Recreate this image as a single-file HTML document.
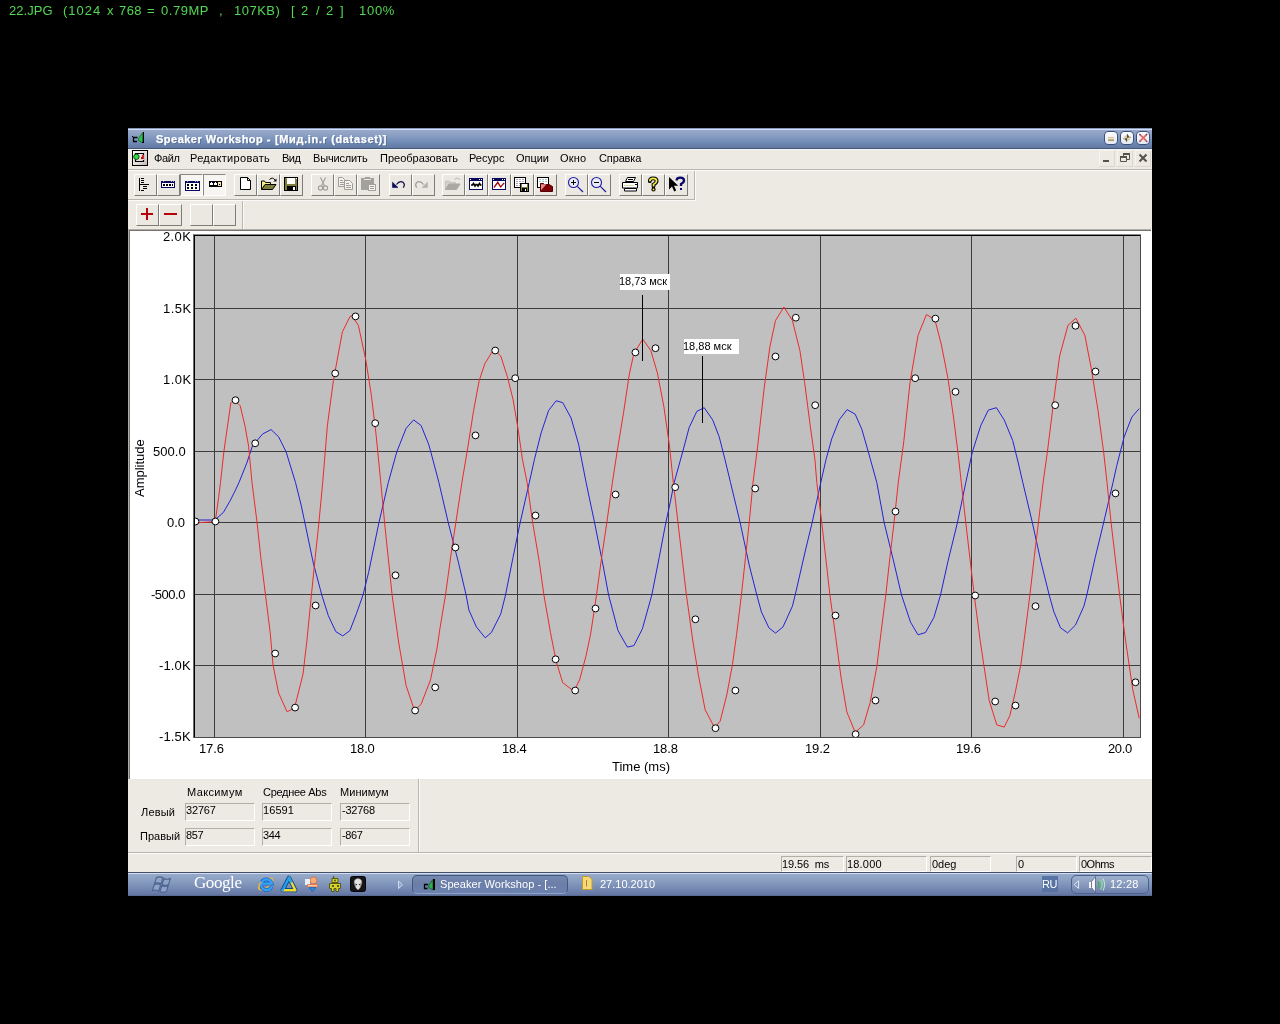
<!DOCTYPE html>
<html lang="ru">
<head>
<meta charset="utf-8">
<title>22.JPG - Speaker Workshop</title>
<style>
html,body{margin:0;padding:0;background:#000;}
body{width:1280px;height:1024px;overflow:hidden;position:relative;font-family:"Liberation Sans", sans-serif;font-size:11px;}
div,span.t,svg{position:absolute;box-sizing:border-box;}
span.t{white-space:pre;font-family:"Liberation Sans", sans-serif;will-change:transform;}
svg{overflow:visible;}
.btn{background:#ebe8e2;border-top:1px solid #fff;border-left:1px solid #fff;border-right:1px solid #7e7c77;border-bottom:1px solid #7e7c77;}
.btnp{background:#f6f5f1;border-top:1px solid #8a8882;border-left:1px solid #8a8882;border-right:1px solid #fff;border-bottom:1px solid #fff;}
.fld{border-top:1px solid #b2afa6;border-left:1px solid #b2afa6;border-right:1px solid #fff;border-bottom:1px solid #fff;}
</style>
</head>
<body>
<header class="viewer-info">
<span class="t" style="left:9.26px;top:2.30px;font-size:13px;line-height:17px;color:#52d852;letter-spacing:0.05px;">22.JPG</span>
<span class="t" style="left:62.50px;top:2.30px;font-size:13px;line-height:17px;color:#52d852;letter-spacing:1.00px;">(1024</span>
<span class="t" style="left:106.95px;top:2.30px;font-size:13px;line-height:17px;color:#52d852;">x</span>
<span class="t" style="left:119.36px;top:2.30px;font-size:13px;line-height:17px;color:#52d852;letter-spacing:0.42px;">768</span>
<span class="t" style="left:146.98px;top:2.30px;font-size:13px;line-height:17px;color:#52d852;">=</span>
<span class="t" style="left:160.93px;top:2.30px;font-size:13px;line-height:17px;color:#52d852;letter-spacing:0.53px;">0.79MP</span>
<span class="t" style="left:219.19px;top:2.30px;font-size:13px;line-height:17px;color:#52d852;">,</span>
<span class="t" style="left:234.30px;top:2.30px;font-size:13px;line-height:17px;color:#52d852;letter-spacing:0.49px;">107KB)</span>
<span class="t" style="left:290.60px;top:2.30px;font-size:13px;line-height:17px;color:#52d852;">[</span>
<span class="t" style="left:301.46px;top:2.30px;font-size:13px;line-height:17px;color:#52d852;">2</span>
<span class="t" style="left:315.71px;top:2.30px;font-size:13px;line-height:17px;color:#52d852;">/</span>
<span class="t" style="left:325.66px;top:2.30px;font-size:13px;line-height:17px;color:#52d852;">2</span>
<span class="t" style="left:339.83px;top:2.30px;font-size:13px;line-height:17px;color:#52d852;">]</span>
<span class="t" style="left:359.30px;top:2.30px;font-size:13px;line-height:17px;color:#52d852;letter-spacing:0.71px;">100%</span>
</header>
<main class="screenshot">
<div style="left:128px;top:128px;width:1024px;height:768px;background:#edeae3"></div>
<header class="titlebar">
<div style="left:128px;top:128px;width:1024px;height:21px;background:linear-gradient(#8797b8 0px,#8797b8 1px,#d0defc 1px,#d0defc 2px,#98a9c9 2px,#8fa2c5 6px,#7d95bd 11px,#6b86b1 16px,#647ca6 19px,#657a9c 20px,#47597a 20px,#47597a 21px)"></div>
<span class="t" style="left:155.55px;top:131.99px;font-size:11px;line-height:15px;color:#fff;font-weight:bold;letter-spacing:0.49px;text-shadow:1px 1px 0 rgba(60,80,120,0.5);-webkit-text-stroke:0.25px #fff;">Speaker Workshop -</span>
<span class="t" style="left:274.69px;top:131.99px;font-size:11px;line-height:15px;color:#fff;font-weight:bold;letter-spacing:0.64px;text-shadow:1px 1px 0 rgba(60,80,120,0.5);-webkit-text-stroke:0.25px #fff;">[Мид.in.r (dataset)]</span>
<svg style="left:0;top:0" width="1280" height="1024" viewBox="0 0 1280 1024"><defs><linearGradient id="cb" x1="0" y1="0" x2="0" y2="1"><stop offset="0" stop-color="#fdfdff"/><stop offset="1" stop-color="#e2e7f1"/></linearGradient><linearGradient id="mi" x1="0" y1="0" x2="1" y2="1"><stop offset="0" stop-color="#fafafa"/><stop offset="0.6" stop-color="#e4dcdc"/><stop offset="1" stop-color="#c4b4b4"/></linearGradient></defs><path d="M137.5,137.5h-4v4h3.5" fill="none" stroke="#000" stroke-width="1.3" /><rect x="132" y="136" width="1" height="1" fill="#000" shape-rendering="crispEdges"/><path d="M138.6,138.6L142.6,132.6V142.6L138.6,140.6Z" fill="#28c850" stroke="#0c6a28" stroke-width="0.8" /><rect x="143" y="132" width="1" height="11" fill="#000" shape-rendering="crispEdges"/><rect x="142" y="142" width="1" height="1" fill="#000" shape-rendering="crispEdges"/><rect x="1104.5" y="131.5" width="13" height="13" rx="3.5" fill="url(#cb)" stroke="#3a5180" stroke-width="1"/><rect x="1120.5" y="131.5" width="13" height="13" rx="3.5" fill="url(#cb)" stroke="#3a5180" stroke-width="1"/><rect x="1136.5" y="131.5" width="13" height="13" rx="3.5" fill="url(#cb)" stroke="#3a5180" stroke-width="1"/><rect x="1108" y="137" width="6" height="1" fill="#d6c59a" shape-rendering="crispEdges"/><rect x="1108" y="138" width="6" height="1" fill="#ece4cc" shape-rendering="crispEdges"/><rect x="1108" y="139" width="6" height="1" fill="#c9b684" shape-rendering="crispEdges"/><rect x="1108" y="140" width="6" height="1" fill="#a89a78" shape-rendering="crispEdges"/><path d="M1127,133.6L1130.2,138H1127Z" fill="#4e4e56" stroke="none" stroke-width="1" /><path d="M1127,142.2L1123.8,138H1127Z" fill="#4e4e56" stroke="none" stroke-width="1" /><path d="M1127,138L1131,136.6V138Z" fill="#c8b070" stroke="none" stroke-width="1" /><path d="M1127,138L1123,139.4V138Z" fill="#c8b070" stroke="none" stroke-width="1" /><path d="M1123.4,137.2L1127,134.4V138Z" fill="#d8c890" stroke="none" stroke-width="1" /><path d="M1130.6,138.8L1127,141.6V138Z" fill="#d8c890" stroke="none" stroke-width="1" /><path d="M1140,134.6L1146.6,141.2M1146.6,134.6L1140,141.2" fill="none" stroke="#e26a6a" stroke-width="1.9" /><path d="M1139.4,134L1140.4,135M1147.2,134L1146.2,135M1139.4,141.8L1140.4,140.8M1147.2,141.8L1146.2,140.8" fill="none" stroke="#6a3a3a" stroke-width="1.2" /><rect x="132" y="150" width="16" height="16" fill="#000" shape-rendering="crispEdges"/><rect x="133" y="151" width="14" height="14" fill="url(#mi)" shape-rendering="crispEdges"/><path d="M135.5,153.5h8v8h-8z" fill="none" stroke="#000" stroke-width="1.2" /><rect x="141" y="155" width="3" height="5" fill="#f0c8c8" shape-rendering="crispEdges"/><rect x="142" y="155" width="2" height="4" fill="#d82828" shape-rendering="crispEdges"/><rect x="141" y="157" width="2" height="2" fill="#b01818" shape-rendering="crispEdges"/><circle cx="136.4" cy="156.8" r="2.7" fill="#34d83c" stroke="#0a4a12" stroke-width="1"/><rect x="1114" y="151" width="1" height="16" fill="#dcd8ce" shape-rendering="crispEdges"/><rect x="1099" y="166" width="16" height="1" fill="#dcd8ce" shape-rendering="crispEdges"/><rect x="1099" y="150" width="15" height="1" fill="#f6f4f0" shape-rendering="crispEdges"/><rect x="1099" y="150" width="1" height="16" fill="#f6f4f0" shape-rendering="crispEdges"/><rect x="1132" y="151" width="1" height="16" fill="#dcd8ce" shape-rendering="crispEdges"/><rect x="1117" y="166" width="16" height="1" fill="#dcd8ce" shape-rendering="crispEdges"/><rect x="1117" y="150" width="15" height="1" fill="#f6f4f0" shape-rendering="crispEdges"/><rect x="1117" y="150" width="1" height="16" fill="#f6f4f0" shape-rendering="crispEdges"/><rect x="1150" y="151" width="1" height="16" fill="#dcd8ce" shape-rendering="crispEdges"/><rect x="1135" y="166" width="16" height="1" fill="#dcd8ce" shape-rendering="crispEdges"/><rect x="1135" y="150" width="15" height="1" fill="#f6f4f0" shape-rendering="crispEdges"/><rect x="1135" y="150" width="1" height="16" fill="#f6f4f0" shape-rendering="crispEdges"/><rect x="1103" y="160" width="6" height="2" fill="#55524c" shape-rendering="crispEdges"/><path d="M1123.5,156V153.5H1129.5V159.5H1127" fill="none" stroke="#55524c" stroke-width="1" /><rect x="1123" y="153" width="7" height="2" fill="#55524c" shape-rendering="crispEdges"/><path d="M1120.5,156.5h6v5h-6z" fill="none" stroke="#55524c" stroke-width="1" /><rect x="1120" y="156" width="7" height="2" fill="#55524c" shape-rendering="crispEdges"/><path d="M1139.5,154.5L1146.5,161.5M1146.5,154.5L1139.5,161.5" fill="none" stroke="#55524c" stroke-width="2" /></svg>
</header>
<nav class="menubar">
<div style="left:128px;top:149px;width:1024px;height:1px;background:#f4f6f6"></div>
<div style="left:128px;top:169px;width:1024px;height:1px;background:#b9b6ad"></div>
<div style="left:128px;top:170px;width:1024px;height:1px;background:#fbfaf8"></div>
<span class="t" style="left:153.55px;top:150.99px;font-size:11px;line-height:15px;color:#000;letter-spacing:-0.35px;">Файл</span>
<span class="t" style="left:190.40px;top:150.99px;font-size:11px;line-height:15px;color:#000;letter-spacing:0.31px;">Редактировать</span>
<span class="t" style="left:281.70px;top:150.99px;font-size:11px;line-height:15px;color:#000;letter-spacing:-0.50px;">Вид</span>
<span class="t" style="left:312.90px;top:150.99px;font-size:11px;line-height:15px;color:#000;letter-spacing:-0.16px;">Вычислить</span>
<span class="t" style="left:379.80px;top:150.99px;font-size:11px;line-height:15px;color:#000;">Преобразовать</span>
<span class="t" style="left:469.30px;top:150.99px;font-size:11px;line-height:15px;color:#000;">Ресурс</span>
<span class="t" style="left:516.02px;top:150.99px;font-size:11px;line-height:15px;color:#000;letter-spacing:-0.05px;">Опции</span>
<span class="t" style="left:560.42px;top:150.99px;font-size:11px;line-height:15px;color:#000;letter-spacing:0.15px;">Окно</span>
<span class="t" style="left:598.69px;top:150.99px;font-size:11px;line-height:15px;color:#000;letter-spacing:-0.13px;">Справка</span>
</nav>
<section class="toolbars">
<div style="left:128px;top:199px;width:567px;height:1px;background:#b9b6ad"></div>
<div style="left:128px;top:200px;width:568px;height:1px;background:#fbfaf8"></div>
<div style="left:694px;top:171px;width:1px;height:29px;background:#b9b6ad"></div>
<div style="left:695px;top:171px;width:1px;height:30px;background:#fbfaf8"></div>
<div class="btn" style="left:134px;top:174px;width:23px;height:22px;"></div>
<div class="btn" style="left:157px;top:174px;width:23px;height:22px;"></div>
<div class="btnp" style="left:180px;top:174px;width:23px;height:22px;"></div>
<div class="btnp" style="left:203px;top:174px;width:23px;height:22px;"></div>
<div class="btn" style="left:234px;top:174px;width:23px;height:22px;"></div>
<div class="btn" style="left:257px;top:174px;width:23px;height:22px;"></div>
<div class="btn" style="left:280px;top:174px;width:23px;height:22px;"></div>
<div class="btn" style="left:311px;top:174px;width:23px;height:22px;"></div>
<div class="btn" style="left:334px;top:174px;width:23px;height:22px;"></div>
<div class="btn" style="left:357px;top:174px;width:23px;height:22px;"></div>
<div class="btn" style="left:389px;top:174px;width:23px;height:22px;"></div>
<div class="btn" style="left:412px;top:174px;width:23px;height:22px;"></div>
<div class="btn" style="left:442px;top:174px;width:23px;height:22px;"></div>
<div class="btn" style="left:465px;top:174px;width:23px;height:22px;"></div>
<div class="btn" style="left:488px;top:174px;width:23px;height:22px;"></div>
<div class="btn" style="left:511px;top:174px;width:23px;height:22px;"></div>
<div class="btn" style="left:534px;top:174px;width:23px;height:22px;"></div>
<div class="btn" style="left:565px;top:174px;width:23px;height:22px;"></div>
<div class="btn" style="left:588px;top:174px;width:23px;height:22px;"></div>
<div class="btn" style="left:619px;top:174px;width:23px;height:22px;"></div>
<div class="btn" style="left:642px;top:174px;width:23px;height:22px;"></div>
<div class="btn" style="left:665px;top:174px;width:23px;height:22px;"></div>
<div style="left:242px;top:201px;width:1px;height:28px;background:#b9b6ad"></div>
<div style="left:243px;top:201px;width:1px;height:28px;background:#fbfaf8"></div>
<div class="btn" style="left:136px;top:204px;width:23px;height:22px;"></div>
<div class="btn" style="left:159px;top:204px;width:23px;height:22px;"></div>
<div class="btn" style="left:190px;top:204px;width:23px;height:22px;"></div>
<div class="btn" style="left:213px;top:204px;width:23px;height:22px;"></div>
<svg style="left:0;top:0" width="1280" height="1024" viewBox="0 0 1280 1024"><rect x="139" y="178" width="1" height="13" fill="#000" shape-rendering="crispEdges"/><rect x="141" y="178" width="3" height="1" fill="#000" shape-rendering="crispEdges"/><rect x="141" y="180" width="3" height="1" fill="#000" shape-rendering="crispEdges"/><rect x="141" y="182" width="3" height="1" fill="#000" shape-rendering="crispEdges"/><rect x="140" y="184" width="9" height="1" fill="#000" shape-rendering="crispEdges"/><rect x="143" y="186" width="4" height="1" fill="#000" shape-rendering="crispEdges"/><rect x="143" y="188" width="4" height="1" fill="#000" shape-rendering="crispEdges"/><rect x="141" y="190" width="3" height="1" fill="#000" shape-rendering="crispEdges"/><rect x="161" y="181" width="14" height="7" fill="#08085c" shape-rendering="crispEdges"/><rect x="162" y="183" width="12" height="4" fill="#fff" shape-rendering="crispEdges"/><rect x="163" y="184" width="2" height="2" fill="#000" shape-rendering="crispEdges"/><rect x="166" y="184" width="2" height="2" fill="#000" shape-rendering="crispEdges"/><rect x="169" y="184" width="2" height="2" fill="#000" shape-rendering="crispEdges"/><rect x="172" y="184" width="1" height="2" fill="#000" shape-rendering="crispEdges"/><rect x="163" y="181" width="1" height="1" fill="#9a9ac8" shape-rendering="crispEdges"/><rect x="171" y="181" width="1" height="1" fill="#9a9ac8" shape-rendering="crispEdges"/><rect x="173" y="181" width="1" height="1" fill="#9a9ac8" shape-rendering="crispEdges"/><rect x="185" y="181" width="15" height="10" fill="#08085c" shape-rendering="crispEdges"/><rect x="186" y="183" width="13" height="7" fill="#fff" shape-rendering="crispEdges"/><rect x="187" y="181" width="1" height="1" fill="#9a9ac8" shape-rendering="crispEdges"/><rect x="195" y="181" width="1" height="1" fill="#9a9ac8" shape-rendering="crispEdges"/><rect x="197" y="181" width="1" height="1" fill="#9a9ac8" shape-rendering="crispEdges"/><rect x="187" y="184" width="2" height="2" fill="#000" shape-rendering="crispEdges"/><rect x="191" y="184" width="2" height="2" fill="#000" shape-rendering="crispEdges"/><rect x="195" y="184" width="2" height="2" fill="#000" shape-rendering="crispEdges"/><rect x="187" y="187" width="2" height="2" fill="#000" shape-rendering="crispEdges"/><rect x="191" y="187" width="2" height="2" fill="#000" shape-rendering="crispEdges"/><rect x="195" y="187" width="2" height="2" fill="#000" shape-rendering="crispEdges"/><rect x="209" y="181" width="13" height="6" fill="#000" shape-rendering="crispEdges"/><rect x="210" y="183" width="3" height="2" fill="#fff" shape-rendering="crispEdges"/><rect x="214" y="183" width="3" height="2" fill="#fff" shape-rendering="crispEdges"/><rect x="218" y="182" width="3" height="4" fill="#f6e2a6" shape-rendering="crispEdges"/><rect x="219" y="184" width="1" height="1" fill="#000" shape-rendering="crispEdges"/><rect x="211" y="182" width="1" height="1" fill="#fff" shape-rendering="crispEdges"/><rect x="215" y="182" width="1" height="1" fill="#fff" shape-rendering="crispEdges"/><path d="M240.5,177.5h7l3,3v9h-10z" fill="#fff" stroke="#000" stroke-width="1" /><path d="M247.5,177.5v3h3" fill="none" stroke="#000" stroke-width="1" /><path d="M261.5,189.5v-8.5h3l1,1.5h5v2" fill="#f4f07c" stroke="#000" stroke-width="1" /><path d="M261.5,189.5l3.5,-5h11l-3.5,5z" fill="#7e7e3c" stroke="#000" stroke-width="1" /><path d="M269.5,179.5q3,-3 5.5,0.5" fill="none" stroke="#000" stroke-width="1" /><path d="M273.5,181.5h3v-3z" fill="#000" stroke="none" stroke-width="1" /><rect x="284" y="177" width="14" height="14" fill="#000" shape-rendering="crispEdges"/><rect x="285" y="178" width="12" height="12" fill="#7e7e3c" shape-rendering="crispEdges"/><rect x="287" y="178" width="8" height="6" fill="#fff" shape-rendering="crispEdges"/><rect x="287" y="186" width="9" height="4" fill="#000" shape-rendering="crispEdges"/><rect x="293" y="187" width="2" height="3" fill="#fff" shape-rendering="crispEdges"/><rect x="296" y="178" width="1" height="1" fill="#fff" shape-rendering="crispEdges"/><path d="M320.5,177.5L324.5,186M325.5,177.5L321.5,186" fill="none" stroke="#9f9d97" stroke-width="1.1" /><circle cx="320.5" cy="188" r="2.1" fill="none" stroke="#9f9d97" stroke-width="1.1"/><circle cx="325.5" cy="188" r="2.1" fill="none" stroke="#9f9d97" stroke-width="1.1"/><path d="M338.5,177.5h4l2,2v7h-6z" fill="#f3f2ee" stroke="#9f9d97" stroke-width="1" /><path d="M344.5,180.5h5l3,3v6h-8z" fill="#f3f2ee" stroke="#9f9d97" stroke-width="1" /><rect x="340" y="180" width="3" height="1" fill="#9f9d97" shape-rendering="crispEdges"/><rect x="340" y="182" width="4" height="1" fill="#9f9d97" shape-rendering="crispEdges"/><rect x="340" y="184" width="4" height="1" fill="#9f9d97" shape-rendering="crispEdges"/><rect x="346" y="183" width="3" height="1" fill="#9f9d97" shape-rendering="crispEdges"/><rect x="346" y="185" width="5" height="1" fill="#9f9d97" shape-rendering="crispEdges"/><rect x="346" y="187" width="5" height="1" fill="#9f9d97" shape-rendering="crispEdges"/><rect x="361" y="178" width="13" height="12" fill="#a3a19b" shape-rendering="crispEdges"/><rect x="365" y="177" width="5" height="1" fill="#a3a19b" shape-rendering="crispEdges"/><rect x="364" y="179" width="7" height="1" fill="#e6e4de" shape-rendering="crispEdges"/><rect x="368" y="184" width="8" height="7" fill="#a3a19b" shape-rendering="crispEdges"/><rect x="369" y="185" width="6" height="5" fill="#f3f2ee" shape-rendering="crispEdges"/><rect x="370" y="186" width="4" height="1" fill="#9f9d97" shape-rendering="crispEdges"/><rect x="370" y="188" width="4" height="1" fill="#9f9d97" shape-rendering="crispEdges"/><path d="M392.5,182.2L392.5,187.6L398,187.6Z" fill="#08085c" stroke="#08085c" stroke-width="0.6" /><path d="M396.5,184.5Q399.5,180.2 403,182.2Q405.6,184.6 403.2,187.6" fill="none" stroke="#0a0a40" stroke-width="1.2" /><path d="M427.5,182.2L427.5,187.6L422,187.6Z" fill="#b4b2ac" stroke="#b4b2ac" stroke-width="0.6" /><path d="M423.5,184.5Q420.5,180.2 417,182.2Q414.4,184.6 416.8,187.6" fill="none" stroke="#9f9d97" stroke-width="1.3" /><path d="M445.5,189.5v-8.5h4l1,1.5h5v2" fill="#d2d0ca" stroke="#c4c2bc" stroke-width="1" /><path d="M445.5,189.5l3.5,-5.5h11l-3.5,5.5z" fill="#aaa8a2" stroke="#aaa8a2" stroke-width="1" /><path d="M454.5,179.5q3,-3 5.5,0.5" fill="none" stroke="#b4b2ac" stroke-width="1" /><rect x="469" y="178" width="14" height="12" fill="#08085c" shape-rendering="crispEdges"/><rect x="470" y="181" width="12" height="8" fill="#fff" shape-rendering="crispEdges"/><rect x="470" y="179" width="1" height="1" fill="#fff" shape-rendering="crispEdges"/><rect x="479" y="179" width="1" height="1" fill="#fff" shape-rendering="crispEdges"/><rect x="481" y="179" width="1" height="1" fill="#fff" shape-rendering="crispEdges"/><rect x="492" y="178" width="14" height="12" fill="#08085c" shape-rendering="crispEdges"/><rect x="493" y="181" width="12" height="8" fill="#fff" shape-rendering="crispEdges"/><rect x="493" y="179" width="1" height="1" fill="#fff" shape-rendering="crispEdges"/><rect x="502" y="179" width="1" height="1" fill="#fff" shape-rendering="crispEdges"/><rect x="504" y="179" width="1" height="1" fill="#fff" shape-rendering="crispEdges"/><path d="M471,185h1.5l1,-1.5l1.5,2.5l1,-1.5h1l1,1.5l1.5,-2.5l1,1.5h1" fill="none" stroke="#000" stroke-width="1.6" /><path d="M494,187.5L497.8,182.3L500.6,187L504.2,182.8" fill="none" stroke="#a00010" stroke-width="1.3" /><rect x="514" y="177" width="12" height="11" fill="#000" shape-rendering="crispEdges"/><rect x="515" y="178" width="10" height="9" fill="#fff" shape-rendering="crispEdges"/><rect x="516" y="179" width="2" height="1" fill="#a8a8b8" shape-rendering="crispEdges"/><rect x="519" y="179" width="2" height="1" fill="#a8a8b8" shape-rendering="crispEdges"/><rect x="522" y="179" width="2" height="1" fill="#a8a8b8" shape-rendering="crispEdges"/><rect x="516" y="181" width="2" height="1" fill="#a8a8b8" shape-rendering="crispEdges"/><rect x="519" y="181" width="2" height="1" fill="#a8a8b8" shape-rendering="crispEdges"/><rect x="522" y="181" width="2" height="1" fill="#a8a8b8" shape-rendering="crispEdges"/><rect x="516" y="183" width="2" height="1" fill="#a8a8b8" shape-rendering="crispEdges"/><rect x="519" y="183" width="2" height="1" fill="#a8a8b8" shape-rendering="crispEdges"/><rect x="522" y="183" width="2" height="1" fill="#a8a8b8" shape-rendering="crispEdges"/><rect x="516" y="185" width="2" height="1" fill="#a8a8b8" shape-rendering="crispEdges"/><rect x="519" y="185" width="2" height="1" fill="#a8a8b8" shape-rendering="crispEdges"/><rect x="522" y="185" width="2" height="1" fill="#a8a8b8" shape-rendering="crispEdges"/><rect x="520" y="183" width="9" height="9" fill="#000" shape-rendering="crispEdges"/><rect x="521" y="184" width="7" height="7" fill="#7e7e3c" shape-rendering="crispEdges"/><rect x="522" y="184" width="5" height="3" fill="#fff" shape-rendering="crispEdges"/><rect x="522" y="188" width="5" height="3" fill="#000" shape-rendering="crispEdges"/><rect x="525" y="189" width="1" height="2" fill="#fff" shape-rendering="crispEdges"/><rect x="537" y="177" width="12" height="11" fill="#000" shape-rendering="crispEdges"/><rect x="538" y="178" width="10" height="9" fill="#fff" shape-rendering="crispEdges"/><rect x="539" y="179" width="2" height="1" fill="#a8c8c8" shape-rendering="crispEdges"/><rect x="542" y="179" width="2" height="1" fill="#a8c8c8" shape-rendering="crispEdges"/><rect x="545" y="179" width="2" height="1" fill="#a8c8c8" shape-rendering="crispEdges"/><rect x="539" y="181" width="2" height="1" fill="#a8c8c8" shape-rendering="crispEdges"/><rect x="542" y="181" width="2" height="1" fill="#a8c8c8" shape-rendering="crispEdges"/><rect x="545" y="181" width="2" height="1" fill="#a8c8c8" shape-rendering="crispEdges"/><path d="M540.5,191.5v-8h3l1,1h4.5l3.5,2v5z" fill="#800008" stroke="#500004" stroke-width="1" /><path d="M541,184.2h5.5l-5.5,6z" fill="#e48c8c" stroke="none" stroke-width="1" /><circle cx="573.5" cy="182.5" r="5" fill="#ebebf6" stroke="#1c1cac" stroke-width="1.1"/><path d="M577.3,186.3L583,192" fill="none" stroke="#1c1c9c" stroke-width="1.2" /><rect x="571" y="182" width="5" height="1" fill="#000" shape-rendering="crispEdges"/><rect x="573" y="180" width="1" height="5" fill="#000" shape-rendering="crispEdges"/><circle cx="596.5" cy="182.5" r="5" fill="#ebebf6" stroke="#1c1cac" stroke-width="1.1"/><path d="M600.3,186.3L606,192" fill="none" stroke="#1c1c9c" stroke-width="1.2" /><rect x="594" y="182" width="5" height="1" fill="#000" shape-rendering="crispEdges"/><path d="M625.5,181.5l2,-4h8l-2,4z" fill="#fff" stroke="#000" stroke-width="1" /><path d="M622.5,182.5h15v5.5h-15z" fill="#fff" stroke="#000" stroke-width="1" /><path d="M624.5,188.5h12v2.5h-12z" fill="#fff" stroke="#000" stroke-width="1" /><rect x="628" y="179" width="5" height="1" fill="#000" shape-rendering="crispEdges"/><rect x="624" y="185" width="10" height="1" fill="#d8d8a0" shape-rendering="crispEdges"/><rect x="635" y="184" width="2" height="1" fill="#000" shape-rendering="crispEdges"/><path d="M649.8,181.2Q649.8,178.3 653.2,178.3Q656.6,178.3 656.6,181Q656.6,182.8 653.5,184.6V186.6" fill="none" stroke="#000" stroke-width="3.8" stroke-linecap="round"/><path d="M649.8,181.2Q649.8,178.3 653.2,178.3Q656.6,178.3 656.6,181Q656.6,182.8 653.5,184.6V186.4" fill="none" stroke="#f6f040" stroke-width="1.7" /><circle cx="653.5" cy="189.5" r="2.1" fill="#000"/><circle cx="653.5" cy="189.5" r="1" fill="#f6f040"/><path d="M669,177v12.5l3,-3l2.2,5l2,-1l-2.2,-4.8h4.2z" fill="#000" stroke="none" stroke-width="1" /><path d="M676.6,180.6Q676.6,177.6 680.2,177.6Q684,177.6 684,180.4Q684,182.4 681,184V186" fill="none" stroke="#08086c" stroke-width="2.3" /><rect x="680" y="187.5" width="2.4" height="2.2" fill="#08086c" shape-rendering="crispEdges"/><rect x="141" y="213" width="12" height="2" fill="#b80008" shape-rendering="crispEdges"/><rect x="146" y="208" width="2" height="12" fill="#b80008" shape-rendering="crispEdges"/><rect x="164" y="213" width="13" height="2" fill="#b80008" shape-rendering="crispEdges"/></svg>
</section>
<section class="chart">
<div style="left:128px;top:229px;width:1024px;height:550px;background:#fff"></div>
<div style="left:128px;top:229px;width:1023px;height:1px;background:#b0aea8"></div>
<div style="left:129px;top:230px;width:1022px;height:1px;background:#76746e"></div>
<div style="left:128px;top:229px;width:1px;height:550px;background:#b0aea8"></div>
<div style="left:129px;top:230px;width:1px;height:549px;background:#76746e"></div>
<svg style="left:0;top:0" width="1280" height="1024" viewBox="0 0 1280 1024">
<defs><clipPath id="pc"><rect x="195" y="236" width="945" height="501"/></clipPath></defs>
<rect x="194" y="235" width="947" height="503" fill="#c0c0c0"/>
<g shape-rendering="crispEdges" fill="#3c3c3c">
<rect x="214" y="235" width="1" height="502"/>
<rect x="365" y="235" width="1" height="502"/>
<rect x="517" y="235" width="1" height="502"/>
<rect x="668" y="235" width="1" height="502"/>
<rect x="820" y="235" width="1" height="502"/>
<rect x="971" y="235" width="1" height="502"/>
<rect x="1123" y="235" width="1" height="502"/>
<rect x="194" y="308" width="946" height="1"/>
<rect x="194" y="379" width="946" height="1"/>
<rect x="194" y="451" width="946" height="1"/>
<rect x="194" y="522" width="946" height="1"/>
<rect x="194" y="594" width="946" height="1"/>
<rect x="194" y="665" width="946" height="1"/>
<rect x="193" y="234" width="948" height="1" fill="#8c8c8c"/>
<rect x="193" y="234" width="1" height="504" fill="#6a6a6a"/>
<rect x="194" y="235" width="947" height="1" fill="#000"/>
<rect x="194" y="235" width="1" height="503" fill="#000"/>
<rect x="194" y="737" width="947" height="1" fill="#4a4a4a"/>
<rect x="1140" y="235" width="1" height="503" fill="#4a4a4a"/>
</g>
<polyline clip-path="url(#pc)" fill="none" stroke="#2222d8" stroke-width="1" stroke-linejoin="round" points="196.1,520.0 214.9,520.0 223.3,512.5 229.9,501.2 235.5,490.0 239.0,482.5 246.8,463.0 252.4,446.1 262.7,433.9 271.1,429.6 278.6,436.8 286.1,451.8 295.5,482.5 301.1,505.0 304.9,522.8 313.3,563.1 321.8,595.0 328.3,615.6 335.8,631.6 342.8,635.9 349.9,630.6 356.4,613.8 363.0,595.0 368.6,572.5 378.9,522.8 388.3,482.5 396.8,451.8 406.1,428.3 413.6,419.9 421.1,425.5 428.6,444.2 430.5,450.8 438.9,482.5 448.3,522.8 458.6,563.1 466.1,595.0 468.9,610.0 476.4,626.9 485.2,637.8 491.4,632.5 500.8,613.8 505.5,595.0 513.0,557.5 520.1,522.8 529.3,482.5 534.5,459.2 541.1,433.0 548.6,410.5 556.1,400.8 562.7,402.6 571.1,418.0 578.6,444.2 586.1,482.5 594.6,522.8 603.0,565.0 608.6,595.0 618.0,630.6 627.4,647.1 633.9,645.6 642.4,628.8 651.8,595.0 659.2,557.5 665.8,522.8 670.5,501.2 674.2,482.5 682.7,451.8 689.2,427.4 696.8,411.4 704.2,407.7 712.7,419.9 719.2,436.8 724.9,459.2 730.5,482.5 740.2,522.8 749.2,565.0 756.8,595.0 761.4,611.9 768.9,627.8 775.5,633.1 783.0,626.9 792.4,606.2 795.2,595.0 805.5,550.0 812.1,522.8 820.8,482.5 826.1,459.2 831.8,438.6 839.2,419.9 847.1,409.6 855.2,414.2 861.8,429.2 868.3,451.8 876.8,482.5 884.2,522.8 893.6,561.2 901.5,595.0 910.5,622.2 918.0,634.8 925.5,632.5 933.9,617.5 940.5,595.0 948.0,561.2 957.4,522.8 965.8,482.5 972.4,451.8 980.8,425.5 988.3,410.1 996.4,407.7 1004.2,419.9 1012.7,440.5 1018.3,463.0 1022.8,482.5 1032.4,522.8 1040.8,561.2 1049.2,595.0 1053.9,611.9 1060.5,627.8 1067.6,632.9 1075.5,625.0 1083.9,606.2 1086.8,595.0 1095.2,557.5 1103.6,522.8 1113.0,482.5 1116.8,465.5 1124.2,436.8 1131.8,417.1 1139.2,408.6"/>
<polyline clip-path="url(#pc)" fill="none" stroke="#ee2a2a" stroke-width="1" stroke-linejoin="round" points="196.1,522.8 211.1,521.9 215.5,520.0 218.6,497.5 220.5,482.5 223.9,451.5 230.8,403.0 232.7,401.1 238.3,403.9 240.2,405.8 244.9,425.5 248.6,446.1 252.0,482.5 257.1,522.8 260.8,557.5 265.5,595.0 270.2,632.5 273.0,664.9 278.6,693.0 287.1,711.8 294.5,708.0 303.0,674.2 306.8,641.5 311.4,595.0 315.2,557.5 318.9,522.8 322.7,482.5 327.4,425.5 333.4,380.5 342.4,331.8 349.9,316.8 351.8,315.8 358.3,325.2 365.8,359.9 371.4,395.5 376.1,434.9 380.8,482.5 384.6,522.8 392.1,595.0 398.6,642.1 406.1,685.5 414.6,710.8 421.1,704.2 430.5,679.9 437.1,648.0 439.9,628.8 445.5,595.0 451.1,553.8 455.8,522.8 461.9,482.5 467.1,451.8 473.6,410.5 479.2,380.5 484.9,363.6 492.4,351.4 495.2,350.9 500.8,356.1 507.4,376.8 513.0,399.2 518.1,429.2 522.4,459.2 527.1,482.5 532.7,522.8 539.2,561.2 543.9,595.0 550.5,632.8 556.1,660.9 562.7,682.7 573.9,691.1 579.6,679.9 586.1,655.5 590.8,633.0 596.5,595.0 601.1,561.2 606.8,522.8 612.4,482.5 617.1,451.8 623.6,412.4 629.2,374.9 633.9,353.3 642.8,339.2 650.8,350.5 657.4,373.0 663.9,406.8 669.5,446.1 673.3,482.5 678.0,522.8 686.4,595.0 693.0,642.1 698.6,676.1 705.2,709.9 714.6,727.7 720.2,721.1 726.8,694.9 732.4,664.9 736.6,634.5 741.4,595.0 745.5,557.5 749.2,522.8 753.0,482.5 757.7,446.1 764.2,388.0 769.9,346.8 775.5,320.5 783.9,307.0 792.4,320.5 799.9,350.5 804.6,382.4 810.2,425.5 814.9,459.2 816.8,482.5 821.8,522.8 829.9,595.0 835.5,635.5 841.1,678.0 846.8,711.8 855.2,732.4 863.6,724.9 870.2,702.4 876.8,666.8 881.0,632.8 885.8,595.0 889.9,557.5 894.0,522.8 898.3,482.5 903.9,440.5 910.0,382.5 918.0,335.5 926.4,314.5 934.9,319.6 941.4,344.9 948.0,378.6 953.6,418.0 958.3,455.5 961.3,482.5 965.8,522.8 974.2,595.0 980.3,641.5 989.2,700.5 996.8,724.9 1004.2,727.1 1009.9,715.5 1015.5,691.1 1021.1,663.0 1025.3,631.0 1029.9,595.0 1034.2,557.5 1038.4,522.8 1043.1,482.5 1047.4,451.8 1053.9,399.2 1059.6,356.1 1068.0,325.2 1075.9,318.2 1084.9,335.5 1091.4,369.2 1098.0,410.5 1103.6,451.8 1107.0,482.5 1111.1,522.8 1119.6,595.0 1125.0,636.5 1132.7,689.2 1139.2,718.3"/>
<g shape-rendering="crispEdges"><rect x="620" y="274" width="50" height="16" fill="#fff"/><rect x="642" y="295" width="1" height="66" fill="#000"/><rect x="684" y="339" width="55" height="15" fill="#fff"/><rect x="702" y="356" width="1" height="67" fill="#000"/></g>
<g clip-path="url(#pc)" fill="#fff" stroke="#000" stroke-width="1">
<circle cx="195.5" cy="521.5" r="3.4"/>
<circle cx="215.4" cy="521.5" r="3.4"/>
<circle cx="235.5" cy="400.2" r="3.4"/>
<circle cx="255.2" cy="443.3" r="3.4"/>
<circle cx="275.2" cy="653.5" r="3.4"/>
<circle cx="295.1" cy="707.6" r="3.4"/>
<circle cx="315.6" cy="605.5" r="3.4"/>
<circle cx="335.2" cy="373.4" r="3.4"/>
<circle cx="355.5" cy="316.4" r="3.4"/>
<circle cx="375.2" cy="423.2" r="3.4"/>
<circle cx="395.5" cy="575.3" r="3.4"/>
<circle cx="415.1" cy="710.5" r="3.4"/>
<circle cx="435.2" cy="687.4" r="3.4"/>
<circle cx="455.4" cy="547.5" r="3.4"/>
<circle cx="475.5" cy="435.4" r="3.4"/>
<circle cx="495.2" cy="350.5" r="3.4"/>
<circle cx="515.2" cy="378.2" r="3.4"/>
<circle cx="535.5" cy="515.5" r="3.4"/>
<circle cx="555.6" cy="659.3" r="3.4"/>
<circle cx="575.2" cy="690.5" r="3.4"/>
<circle cx="595.5" cy="608.5" r="3.4"/>
<circle cx="615.6" cy="494.5" r="3.4"/>
<circle cx="635.4" cy="352.4" r="3.4"/>
<circle cx="655.5" cy="348.2" r="3.4"/>
<circle cx="675.2" cy="487.2" r="3.4"/>
<circle cx="695.4" cy="619.3" r="3.4"/>
<circle cx="715.5" cy="728.2" r="3.4"/>
<circle cx="735.4" cy="690.5" r="3.4"/>
<circle cx="755.2" cy="488.5" r="3.4"/>
<circle cx="775.5" cy="356.5" r="3.4"/>
<circle cx="795.8" cy="317.7" r="3.4"/>
<circle cx="815.2" cy="405.2" r="3.4"/>
<circle cx="835.5" cy="615.5" r="3.4"/>
<circle cx="855.6" cy="734.2" r="3.4"/>
<circle cx="875.5" cy="700.5" r="3.4"/>
<circle cx="895.5" cy="511.5" r="3.4"/>
<circle cx="915.2" cy="378.2" r="3.4"/>
<circle cx="935.4" cy="318.6" r="3.4"/>
<circle cx="955.5" cy="391.8" r="3.4"/>
<circle cx="975.2" cy="595.5" r="3.4"/>
<circle cx="995.2" cy="701.5" r="3.4"/>
<circle cx="1015.5" cy="705.5" r="3.4"/>
<circle cx="1035.5" cy="606.2" r="3.4"/>
<circle cx="1055.2" cy="405.2" r="3.4"/>
<circle cx="1075.5" cy="325.8" r="3.4"/>
<circle cx="1095.5" cy="371.5" r="3.4"/>
<circle cx="1115.5" cy="493.4" r="3.4"/>
<circle cx="1135.5" cy="682.3" r="3.4"/>
</g>
</svg>
<span class="t" style="left:619.47px;top:273.99px;font-size:11px;line-height:15px;color:#000;letter-spacing:-0.04px;">18,73 мск</span>
<span class="t" style="left:683.47px;top:338.99px;font-size:11px;line-height:15px;color:#000;">18,88 мск</span>
<span class="t" style="left:162.86px;top:228.00px;font-size:13px;line-height:17px;color:#000;letter-spacing:0.39px;">2.0K</span>
<span class="t" style="left:162.60px;top:300.30px;font-size:13px;line-height:17px;color:#000;letter-spacing:0.48px;">1.5K</span>
<span class="t" style="left:162.60px;top:371.30px;font-size:13px;line-height:17px;color:#000;letter-spacing:0.48px;">1.0K</span>
<span class="t" style="left:152.80px;top:443.30px;font-size:13px;line-height:17px;color:#000;letter-spacing:0.06px;">500.0</span>
<span class="t" style="left:167.33px;top:514.30px;font-size:13px;line-height:17px;color:#000;">0.0</span>
<span class="t" style="left:150.69px;top:586.30px;font-size:13px;line-height:17px;color:#000;letter-spacing:-0.48px;">-500.0</span>
<span class="t" style="left:158.59px;top:657.30px;font-size:13px;line-height:17px;color:#000;letter-spacing:0.15px;">-1.0K</span>
<span class="t" style="left:158.59px;top:728.30px;font-size:13px;line-height:17px;color:#000;letter-spacing:0.15px;">-1.5K</span>
<span class="t" style="left:198.80px;top:740.30px;font-size:13px;line-height:17px;color:#000;letter-spacing:-0.13px;">17.6</span>
<span class="t" style="left:349.80px;top:740.30px;font-size:13px;line-height:17px;color:#000;letter-spacing:-0.15px;">18.0</span>
<span class="t" style="left:501.80px;top:740.30px;font-size:13px;line-height:17px;color:#000;letter-spacing:-0.17px;">18.4</span>
<span class="t" style="left:652.80px;top:740.30px;font-size:13px;line-height:17px;color:#000;letter-spacing:-0.13px;">18.8</span>
<span class="t" style="left:804.80px;top:740.30px;font-size:13px;line-height:17px;color:#000;letter-spacing:-0.13px;">19.2</span>
<span class="t" style="left:955.80px;top:740.30px;font-size:13px;line-height:17px;color:#000;letter-spacing:-0.13px;">19.6</span>
<span class="t" style="left:1108.46px;top:740.30px;font-size:13px;line-height:17px;color:#000;letter-spacing:-0.37px;">20.0</span>
<span class="t" style="left:611.84px;top:758.30px;font-size:13px;line-height:17px;color:#000;">Time (ms)</span>
<div style="left:144.3px;top:497px;width:0;height:0;transform:rotate(-90deg);transform-origin:0 0;"><span class="t" style="left:0.07px;top:-12.80px;font-size:13px;line-height:17px;color:#000;">Amplitude</span></div>
</section>
<section class="stats-panel">
<div style="left:418px;top:779px;width:1px;height:73px;background:#b9b6ad"></div>
<div style="left:419px;top:779px;width:1px;height:73px;background:#fbfaf8"></div>
<div style="left:128px;top:852px;width:1024px;height:1px;background:#b9b6ad"></div>
<div style="left:128px;top:853px;width:1024px;height:1px;background:#fbfaf8"></div>
<span class="t" style="left:186.50px;top:784.99px;font-size:11px;line-height:15px;color:#000;letter-spacing:0.37px;">Максимум</span>
<span class="t" style="left:263.39px;top:784.99px;font-size:11px;line-height:15px;color:#000;letter-spacing:-0.30px;">Среднее Abs</span>
<span class="t" style="left:340.00px;top:784.99px;font-size:11px;line-height:15px;color:#000;letter-spacing:0.06px;">Минимум</span>
<span class="t" style="left:141.06px;top:804.99px;font-size:11px;line-height:15px;color:#000;letter-spacing:0.16px;">Левый</span>
<span class="t" style="left:140.20px;top:828.99px;font-size:11px;line-height:15px;color:#000;">Правый</span>
<div class="fld" style="left:185px;top:803px;width:70px;height:18px;"></div>
<span class="t" style="left:186.28px;top:802.99px;font-size:11px;line-height:15px;color:#000;letter-spacing:-0.17px;">32767</span>
<div class="fld" style="left:262px;top:803px;width:70px;height:18px;"></div>
<span class="t" style="left:262.57px;top:802.99px;font-size:11px;line-height:15px;color:#000;letter-spacing:0.07px;">16591</span>
<div class="fld" style="left:340px;top:803px;width:70px;height:18px;"></div>
<span class="t" style="left:341.52px;top:802.99px;font-size:11px;line-height:15px;color:#000;letter-spacing:-0.25px;">-32768</span>
<div class="fld" style="left:185px;top:828px;width:70px;height:18px;"></div>
<span class="t" style="left:186.34px;top:827.99px;font-size:11px;line-height:15px;color:#000;letter-spacing:-0.31px;">857</span>
<div class="fld" style="left:262px;top:828px;width:70px;height:18px;"></div>
<span class="t" style="left:263.38px;top:827.99px;font-size:11px;line-height:15px;color:#000;letter-spacing:-0.34px;">344</span>
<div class="fld" style="left:340px;top:828px;width:70px;height:18px;"></div>
<span class="t" style="left:341.52px;top:827.99px;font-size:11px;line-height:15px;color:#000;letter-spacing:-0.36px;">-867</span>
</section>
<section class="statusbar">
<div class="fld" style="left:781px;top:856px;width:63px;height:16px;"></div>
<span class="t" style="left:782.37px;top:856.99px;font-size:11px;line-height:15px;color:#000;letter-spacing:-0.13px;">19.56  ms</span>
<div class="fld" style="left:846px;top:856px;width:81px;height:16px;"></div>
<span class="t" style="left:847.17px;top:856.99px;font-size:11px;line-height:15px;color:#000;letter-spacing:0.18px;">18.000</span>
<div class="fld" style="left:930px;top:856px;width:61px;height:16px;"></div>
<span class="t" style="left:931.65px;top:856.99px;font-size:11px;line-height:15px;color:#000;">0deg</span>
<div class="fld" style="left:1016px;top:856px;width:61px;height:16px;"></div>
<span class="t" style="left:1017.75px;top:856.99px;font-size:11px;line-height:15px;color:#000;">0</span>
<div class="fld" style="left:1079px;top:856px;width:73px;height:16px;"></div>
<span class="t" style="left:1081.05px;top:856.99px;font-size:11px;line-height:15px;color:#000;letter-spacing:-0.50px;">0Ohms</span>
</section>
<footer class="taskbar">
<div style="left:128px;top:872px;width:1024px;height:24px;background:linear-gradient(#454f64 0px,#454f64 1px,#cfdcf6 1px,#cfdcf6 2px,#98aaca 2px,#8fa3c5 6px,#8196bb 12px,#7487b0 17px,#677aa7 22px,#5f7199 23px,#56678e 24px)"></div>
<span class="t" style="left:194.03px;top:872.41px;font-size:17px;line-height:21px;color:#fff;font-family:'Liberation Serif',serif;letter-spacing:-0.42px;">Google</span>
<div style="left:412px;top:875px;width:156px;height:19px;background:linear-gradient(#7587ae,#6a7ea8 50%,#6c82ae);border:1px solid #44587f;border-bottom-color:#8ea2c6;border-radius:5px;"></div>
<span class="t" style="left:439.76px;top:876.99px;font-size:11px;line-height:15px;color:#fff;letter-spacing:0.06px;">Speaker Workshop - [...</span>
<span class="t" style="left:599.91px;top:876.99px;font-size:11px;line-height:15px;color:#fff;">27.10.2010</span>
<div style="left:1042px;top:876px;width:16px;height:16px;background:#5673a4"></div>
<span class="t" style="left:1042.20px;top:876.99px;font-size:11px;line-height:15px;color:#fff;letter-spacing:-0.50px;">RU</span>
<div style="left:1071px;top:875px;width:78px;height:19px;background:linear-gradient(rgba(255,255,255,0.10),rgba(255,255,255,0.02));border:1px solid #4a628e;border-radius:5px;"></div>
<span class="t" style="left:1110.27px;top:876.99px;font-size:11px;line-height:15px;color:#fff;letter-spacing:0.20px;">12:28</span>
<svg style="left:0;top:0" width="1280" height="1024" viewBox="0 0 1280 1024"><path d="M156.4,877.6q3.4,-1.6 6.4,0.2l-1.8,6q-3,-1.8 -6.4,-0.2z" fill="#8ea3c8" stroke="#4d648e" stroke-width="1.1" /><path d="M164,878.4q3,1.6 6.4,0l-1.8,6q-3.4,1.6 -6.4,0z" fill="#8ea3c8" stroke="#4d648e" stroke-width="1.1" /><path d="M154.2,884.8q3.4,-1.6 6.4,0.2l-1.8,6q-3,-1.8 -6.4,-0.2z" fill="#8ea3c8" stroke="#4d648e" stroke-width="1.1" /><path d="M161.8,885.6q3,1.6 6.4,0l-1.8,6q-3.4,1.6 -6.4,0z" fill="#8ea3c8" stroke="#4d648e" stroke-width="1.1" /><ellipse cx="265.8" cy="884" rx="8.4" ry="3.4" transform="rotate(-38 265.8 884)" fill="none" stroke="#eeb440" stroke-width="1.4"/><path d="M271.6,886.6A5.4,5.4 0 1 1 271.8,883.6H261.4" fill="none" stroke="#1468c8" stroke-width="3.6" /><path d="M271.6,886.6A5.4,5.4 0 1 1 271.8,883.6H261.4" fill="none" stroke="#3aa2f4" stroke-width="2.2" /><path d="M259.4,889.4Q258,886 261,881.6" fill="none" stroke="#eeb440" stroke-width="1.4" /><path d="M289,877.8L295.4,890.2H282.6Z" fill="none" stroke="#0c4a8c" stroke-width="4.2" stroke-linejoin="round"/><path d="M289,877.8L295.4,890.2H282.6" fill="none" stroke="#f4dc28" stroke-width="2.4" stroke-linejoin="round" stroke-linecap="round"/><path d="M282.6,890.2L289,877.8L291,881.6" fill="none" stroke="#28a0f0" stroke-width="2.4" stroke-linejoin="round" stroke-linecap="round"/><circle cx="313.5" cy="880.4" r="3.4" fill="#f4b080" stroke="#e0703c" stroke-width="1"/><rect x="305" y="879" width="5" height="6" fill="#e8f0fa" shape-rendering="crispEdges"/><path d="M307.5,884.5h10v2.5h-10z" fill="#f2c8a8" stroke="#e0703c" stroke-width="0.8" /><path d="M309,887.6h7l-3.5,4z" fill="#2c8ae0" stroke="#1a60b0" stroke-width="0.8" /><path d="M333.5,876v2" fill="none" stroke="#5a5a10" stroke-width="1.2" /><path d="M332,878.5h6v4h-6z" fill="#d6d428" stroke="#5a5a10" stroke-width="1" /><circle cx="335" cy="880.5" r="1" fill="#5a5a10" stroke="none" stroke-width="1"/><path d="M329.5,883.5h11v5h-2v3h-2.5v-3h-2v3h-2.5v-3h-2z" fill="#d6d428" stroke="#5a5a10" stroke-width="1" /><rect x="331.5" y="885" width="2" height="2" fill="#5a5a10" shape-rendering="crispEdges"/><rect x="336.5" y="885" width="2" height="2" fill="#5a5a10" shape-rendering="crispEdges"/><rect x="350.5" y="876.5" width="15" height="15" rx="2" fill="#161616" stroke="#05050a" stroke-width="1"/><path d="M358,878.6q4.6,0.4 3.6,5.2q-1,4.4 -3.6,6.2q-2.6,-1.8 -3.6,-6.2q-1,-4.8 3.6,-5.2z" fill="#e4e4e4" stroke="#8a8a8a" stroke-width="0.6" /><path d="M355.4,883.2l2,1.6l-1.6,0.6zM360.6,883.2l-2,1.6l1.6,0.6z" fill="#222" stroke="none" stroke-width="1" /><path d="M398.5,881L402.5,884.8L398.5,888.6Z" fill="#8fa4c9" stroke="#cfdaef" stroke-width="1" /><path d="M428,884.5h-3.5v4h3" fill="none" stroke="#000" stroke-width="1.3" /><path d="M428.8,885.2L433,879.4V890L428.8,887.6Z" fill="#2cb050" stroke="#0a5a20" stroke-width="0.8" /><rect x="433" y="879" width="2" height="11" fill="#000" shape-rendering="crispEdges"/><path d="M582.5,876.5h6l3.5,2.5v10.5h-9.5z" fill="#f6d878" stroke="#c09a30" stroke-width="1" /><path d="M586.5,880v6.5" fill="none" stroke="#a8842c" stroke-width="1" /><path d="M1078.6,880.8L1074.2,884.6L1078.6,888.4Z" fill="#8298c0" stroke="#dfe7f5" stroke-width="1" /><rect x="1088.5" y="881.5" width="3" height="6" fill="#f2f4f8" shape-rendering="crispEdges"/><path d="M1091.5,881.5L1095.5,876.5V892.5L1091.5,887.5Z" fill="#f8f8fa" stroke="#50607c" stroke-width="0.8" /><path d="M1098,881.6q2,3 0,6" fill="none" stroke="#3cb454" stroke-width="1.4" /><path d="M1100.6,879.6q3,5 0,10" fill="none" stroke="#8ad89a" stroke-width="1.4" /><path d="M1103,878.6q3.2,6 0,12" fill="none" stroke="#c8ecd0" stroke-width="1" /></svg>
</footer>
</main>
</body>
</html>
